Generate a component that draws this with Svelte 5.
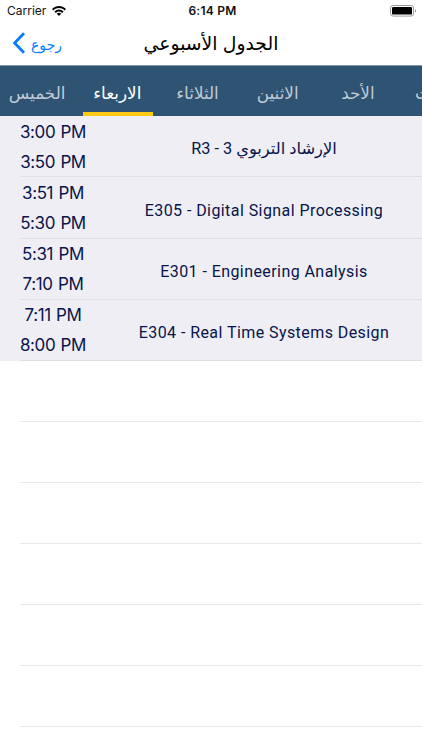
<script lang="ts">
  type Lesson = { start: string; end: string; title: string; rtl?: boolean };

  const days = [
    { name: 'الخميس', id: 'thu' },
    { name: 'الاربعاء', id: 'wed' },
    { name: 'الثلاثاء', id: 'tue' },
    { name: 'الاثنين', id: 'mon' },
    { name: 'الأحد', id: 'sun' },
    { name: 'السبت', id: 'sat' }
  ];

  const lessons: Lesson[] = [
    { start: '3:00 PM', end: '3:50 PM', title: 'الإرشاد التربوي 3 - R3', rtl: true },
    { start: '3:51 PM', end: '5:30 PM', title: 'E305 - Digital Signal Processing' },
    { start: '5:31 PM', end: '7:10 PM', title: 'E301 - Engineering Analysis' },
    { start: '7:11 PM', end: '8:00 PM', title: 'E304 - Real Time Systems Design' }
  ];

  const emptyRows = 7;

  let selected = $state('wed');
</script>

<div class="screen">
  <header>
    <div class="status">
      <div class="carrier">
        <span>Carrier</span>
        <svg class="wifi" viewBox="0 0 14 10" width="14" height="10">
          <path d="M0 3.1C4-1 10-1 14 3.1L12.6 4.5C9.4 1.3 4.6 1.3 1.4 4.5Z" />
          <path d="M2.4 5.5C5.1 2.8 8.9 2.8 11.6 5.5L10.2 6.9C8.4 5.1 5.6 5.1 3.8 6.9Z" />
          <path d="M4.7 7.8C6 6.5 8 6.5 9.3 7.8L7 10Z" />
        </svg>
      </div>
      <span class="clock">6:14 PM</span>
      <svg class="battery" viewBox="0 0 27 12" width="27" height="12">
        <rect x="0.5" y="0.5" width="23" height="10.6" rx="2.6" fill="#fff" stroke="#9a9a9a" />
        <rect x="2" y="2" width="20" height="7.6" rx="1.2" fill="#000" />
        <path d="M25 4C26.4 4.3 26.4 7.3 25 7.6Z" fill="#999" />
      </svg>
    </div>
    <div class="nav">
      <button class="back">
        <svg viewBox="0 0 14 22" width="14" height="22">
          <path d="M12 1.2L2.6 11L12 20.8" fill="none" stroke="#087bff" stroke-width="2.8" />
        </svg>
        <span>رجوع</span>
      </button>
      <h1>الجدول الأسبوعي</h1>
      <div class="side"></div>
    </div>
  </header>

  <nav class="tabs">
    {#each days as day}
      <button class="tab" class:active={selected === day.id} onclick={() => (selected = day.id)}>
        <span>{day.name}</span>
      </button>
    {/each}
  </nav>

  <main>
    {#each lessons as lesson}
      <div class="row filled">
        <div class="times">
          <span>{lesson.start}</span>
          <span>{lesson.end}</span>
        </div>
        <div class="title" class:rtl={lesson.rtl} dir={lesson.rtl ? 'rtl' : 'ltr'}>
          <span>{lesson.title}</span>
        </div>
      </div>
    {/each}
    {#each Array(emptyRows) as _}
      <div class="row"></div>
    {/each}
  </main>
</div>

<style>
  :global(body) {
    margin: 0;
    background: #fff;
  }

  .screen {
    width: 422px;
    height: 750px;
    overflow: hidden;
    background: #fff;
    font-family: Inter, 'DejaVu Sans', sans-serif;
    display: flex;
    flex-direction: column;
  }

  button {
    border: 0;
    background: none;
    padding: 0;
    font-family: inherit;
    white-space: nowrap;
  }

  header {
    height: 65px;
    flex: none;
    box-sizing: border-box;
  }

  .status {
    display: grid;
    grid-template-columns: 1fr auto 1fr;
    align-items: center;
    height: 21px;
    padding: 0 5px 0 7px;
    font-size: 12px;
    color: #111;
  }

  .carrier {
    display: flex;
    align-items: center;
    gap: 6px;
  }

  .clock {
    padding-left: 1px;
    font-weight: 600;
    letter-spacing: 0.25px;
  }

  .battery {
    justify-self: end;
  }

  .nav {
    display: grid;
    grid-template-columns: 80px 1fr 80px;
    align-items: center;
    height: 44px;
  }

  .back {
    display: flex;
    align-items: center;
    gap: 5px;
    padding-left: 12px;
    color: #087bff;
    font-size: 14px;
  }

  .back span {
    padding-top: 2px;
  }

  h1 {
    margin: 0;
    text-align: center;
    font-size: 18.8px;
    font-weight: 400;
    color: #000;
    white-space: nowrap;
  }

  .tabs {
    display: flex;
    flex: none;
    height: 51.4px;
    margin-left: -3px;
    box-sizing: border-box;
    border-top: 1px solid #8396a8;
    background: #2f5373;
  }

  .tab {
    position: relative;
    flex: 0 0 80.2px;
    padding-top: 4px;
    font-size: 16.8px;
    color: #c1cad4;
  }

  .tab.active {
    color: #fff;
  }

  .tab.active::after {
    content: '';
    position: absolute;
    left: 6px;
    bottom: 0;
    width: 70px;
    height: 4px;
    background: #fdc915;
  }

  .row {
    display: flex;
    height: 61.1px;
    box-sizing: border-box;
    background: linear-gradient(#e9e9eb, #e9e9eb) 20px 100% / 100% 1px no-repeat;
  }

  .row.filled {
    background-color: #efeef5;
    background-image: linear-gradient(#dfdfe5, #dfdfe5);
  }

  .times {
    flex: none;
    width: 106px;
    padding-top: 0.5px;
    box-sizing: border-box;
    display: flex;
    flex-direction: column;
    align-items: center;
    font-size: 17px;
    letter-spacing: -0.4px;
    word-spacing: 1px;
    line-height: 30px;
    color: #08144a;
  }

  .title {
    flex: 1;
    display: flex;
    align-items: center;
    justify-content: center;
    padding-top: 4px;
    font-family: Roboto, 'DejaVu Sans', sans-serif;
    font-size: 16px;
    letter-spacing: 0.43px;
    color: #08144a;
    white-space: nowrap;
  }

  /* spacing would pull the joined Arabic letters apart */
  .title.rtl {
    font-size: 16.3px;
    letter-spacing: 0;
  }
</style>
